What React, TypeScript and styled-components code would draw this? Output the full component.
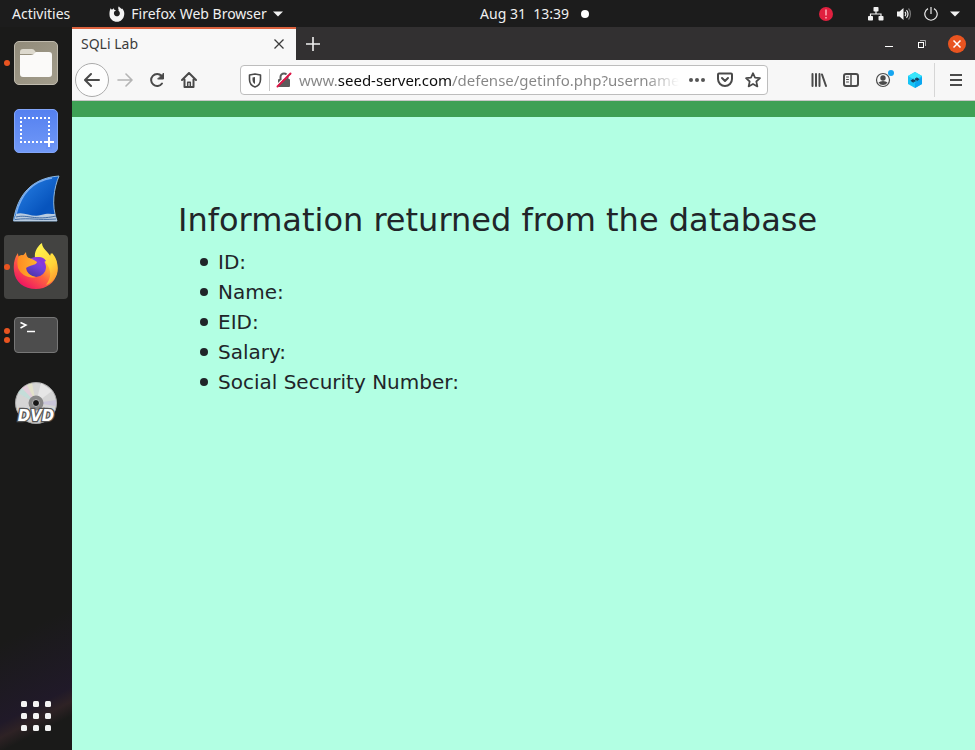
import React from "react";
import styled, { createGlobalStyle, css } from "styled-components";

const UI_FONT = `"Noto Sans", "Open Sans", sans-serif`;

const GlobalStyle = createGlobalStyle`
  *, *::before, *::after { box-sizing: border-box; }
  html, body { margin: 0; padding: 0; }
  button, input { font: inherit; color: inherit; margin: 0; }
  svg { display: block; flex: none; }
`;

const Desktop = styled.div`
  display: flex;
  flex-direction: column;
  min-height: 100vh;
  background: #1b1b1b;
  font: 14px/20px ${UI_FONT};
`;

/* ---------- system bar ---------- */

const SystemBar = styled.header`
  display: flex;
  align-items: center;
  height: 27px;
  padding: 0 15px 0 12px;
  background: #1c1c1c;
  color: #f0f0f0;
`;

const PlainButton = styled.button`
  display: flex;
  align-items: center;
  justify-content: center;
  padding: 0;
  border: 0;
  background: none;
  white-space: nowrap;
`;

const BarStart = styled.div`
  display: flex;
  flex: 1;
  align-items: center;
  gap: 39px;
`;

const AppMenu = styled(PlainButton)`
  gap: 6px;
`;

const Clock = styled(PlainButton)`
  gap: 12px;
  white-space: pre;
`;

const NotificationDot = styled.span`
  width: 8px;
  height: 8px;
  border-radius: 50%;
  background: #fff;
`;

const BarEnd = styled.div`
  display: flex;
  align-items: center;
  justify-content: flex-end;
  width: 371px;
`;

const Alert = styled(PlainButton)`
  margin-right: 35px;
`;

const StatusMenu = styled(PlainButton)`
  gap: 12px;
`;

/* ---------- dock ---------- */

const Workspace = styled.div`
  display: flex;
  flex: 1;
`;

const Dock = styled.nav`
  display: flex;
  flex-direction: column;
  gap: 4px;
  width: 72px;
  padding: 4px 4px 2px;
  background:
    linear-gradient(153deg, transparent 50%, rgba(46, 24, 76, 0.3) 78%, rgba(76, 46, 54, 0.4) 83%, transparent 88%) bottom / 100% 250px no-repeat,
    #1a1a19;
`;

const DockItem = styled.button<{ $active?: boolean }>`
  position: relative;
  display: flex;
  align-items: center;
  justify-content: center;
  height: 64px;
  padding: 0;
  border: 0;
  border-radius: 4px;
  background: ${(p) => (p.$active ? "#434341" : "transparent")};
`;

const RunningDots = styled.span`
  position: absolute;
  left: 0;
  top: 0;
  bottom: 0;
  display: flex;
  flex-direction: column;
  justify-content: center;
  gap: 3px;
`;

const RunningDot = styled.i`
  width: 6px;
  height: 6px;
  border-radius: 50%;
  background: #e95420;
`;

const DockSpacer = styled.div`
  flex: 1;
`;

/* ---------- browser ---------- */

const Browser = styled.section`
  display: flex;
  flex: 1;
  flex-direction: column;
  min-width: 0;
`;

const TabStrip = styled.div`
  display: flex;
  align-items: center;
  height: 33px;
  padding-right: 9px;
  background: #323031;
  color: #f4f4f4;
`;

const Tab = styled.div`
  display: flex;
  align-items: center;
  justify-content: space-between;
  align-self: stretch;
  width: 224px;
  padding: 0 12px 2px 9px;
  border-top: 2px solid #dd633f;
  background: #f8f8f8;
  color: #3c3c3c;
`;

const NewTab = styled(PlainButton)`
  width: 34px;
  height: 31px;
`;

const WindowControls = styled.div`
  display: flex;
  align-items: center;
  gap: 19px;
  margin-left: auto;
`;

const ControlButton = styled(PlainButton)`
  min-width: 14px;
`;

const Toolbar = styled.div`
  display: flex;
  align-items: center;
  height: 41px;
  padding: 0 3px;
  border-bottom: 1px solid #c8c8c8;
  background: #f7f7f7;
  color: #4a4a4a;
`;

const ToolButton = styled(PlainButton)<{ $faded?: boolean }>`
  width: 32px;
  height: 32px;
  ${(p) => p.$faded && css`color: #b4b4b4;`}
`;

const BackButton = styled(PlainButton)`
  width: 34px;
  height: 34px;
  border: 1px solid #ababab;
  border-radius: 50%;
  background: #fdfdfd;
`;

const AddressBar = styled.div`
  display: flex;
  flex: 1;
  align-items: center;
  min-width: 0;
  height: 30px;
  margin: 0 35px;
  border: 1px solid #bdbdbd;
  border-radius: 4px;
  background: #fff;
`;

const AddressButton = styled(PlainButton)`
  width: 28px;
  height: 28px;
`;

const AddressDivider = styled.span`
  width: 1px;
  height: 22px;
  background: #c8c8c8;
`;

/* The host name is drawn darker than the rest and the end of the address fades out. */
const AddressInput = styled.input`
  flex: 1;
  min-width: 0;
  height: 24px;
  margin: 0 4px 0 1px;
  padding: 0;
  border: 0;
  outline: 0;
  font-size: 15px;
  color: transparent;
  background: linear-gradient(to right, #858585 39px, #0c0c0c 39px, #0c0c0c 153px, #858585 153px);
  background-clip: text;
  -webkit-background-clip: text;
  mask-image: linear-gradient(to right, #000 calc(100% - 34px), transparent);
`;

const ToolDivider = styled.span`
  width: 1px;
  height: 34px;
  margin: 0 5px 0 3px;
  background: #d6d6d6;
`;

/* ---------- page ---------- */

const Page = styled.main`
  flex: 1;
  border-top: 16px solid #3ea055;
  background: #b2ffe3;
  color: #212529;
  font-family: "DejaVu Sans", sans-serif;
`;

const PageContent = styled.div`
  padding: 84px 106px;
`;

const PageHeading = styled.h1`
  margin: 0 0 8px;
  font-size: 32px;
  font-weight: 400;
  line-height: 38px;
`;

const FieldList = styled.ul`
  margin: 0;
  padding-left: 22px;
  list-style: none;
  font-size: 20px;
  line-height: 30px;
`;

const Field = styled.li`
  display: flex;
  align-items: center;
  gap: 10px;

  &::before {
    content: "";
    width: 8px;
    height: 8px;
    border-radius: 50%;
    background: currentColor;
  }
`;

/* ---------- icons ---------- */

const FirefoxMono = () => (
  <svg width="16" height="16" viewBox="0 0 16 16">
    <path fill="#f2f2f2" d="M1.600 2.300 2.900 3.700 4.900 2.200 5.200 3.800 7.100 4.300C5.200 5 4.700 6.300 5 7.900c.5 2 3 3 4.700 1.800 1.600-1.200 1.400-3.400.4-4.500L9 4.500l1-.2C8.900 2.700 9 1.300 9.900.2c.6 1.400 2 1.800 3 2.800l.3-.6c1.700 1.800 2.400 4 2 6.300C14.700 13 11.700 15.700 8 15.700 4 15.700.7 12.800.5 8.900.3 6.500.8 4.200 1.600 2.300Z" />
  </svg>
);

const Caret = () => (
  <svg width="10" height="6" viewBox="0 0 10 6"><path fill="#f2f2f2" d="M0 .5h10L5 5.500Z" /></svg>
);

const AlertIcon = () => (
  <svg width="14" height="14" viewBox="0 0 14 14">
    <circle cx="7" cy="7" r="7" fill="#e0203f" />
    <path stroke="#ffb9c4" strokeWidth="1.400" d="M7 2.500v6M7 10v1.500" />
  </svg>
);

const NetworkIcon = () => (
  <svg width="16" height="14" viewBox="0 0 16 14" fill="#f2f2f2">
    <rect x="5.500" y="0" width="5" height="4.500" rx=".8" />
    <rect x="0" y="9" width="5" height="4.500" rx=".8" />
    <rect x="10.500" y="9" width="5" height="4.500" rx=".8" />
    <path fill="none" stroke="#f2f2f2" strokeWidth="1.200" d="M8 4v3M2.500 9V7h10.500v2" />
  </svg>
);

const VolumeIcon = () => (
  <svg width="16" height="14" viewBox="0 0 16 14" fill="none">
    <path fill="#f2f2f2" d="M1 4.500h2.500L7.500 1v12L3.500 9.500H1Z" />
    <path stroke="#f2f2f2" strokeWidth="1.200" d="M9 5c1 1 1 3 0 4M10.500 3.200c2 2 2 5.600 0 7.600" />
    <path stroke="#777" strokeWidth="1.200" d="M12.500 1.500c2.600 3 2.600 8 0 11" />
  </svg>
);

const PowerIcon = () => (
  <svg width="14" height="14" viewBox="0 0 14 14" fill="none" stroke="#e8e8e8" strokeWidth="1.200">
    <path d="M4 1.600a6.200 6.200 0 1 0 6 0M7 0v7" />
  </svg>
);

const FilesIcon = () => (
  <svg width="44" height="44" viewBox="0 0 44 44">
    <defs>
      <linearGradient id="files" x1="0" y1="0" x2="1" y2="1">
        <stop offset="0" stopColor="#918b7a" /><stop offset="1" stopColor="#a39d8c" />
      </linearGradient>
    </defs>
    <rect x=".5" y=".5" width="43" height="43" rx="4.500" fill="url(#files)" stroke="#c0bbae" />
    <path fill="#ddd9ce" d="M6 11q0-3 3-3h9q2 0 3 2l2 3H6Z" />
    <path fill="#fbfaf9" d="M6 14h11q2 0 4-2l1-1h13q3 0 3 3v19q0 3-3 3H9q-3 0-3-3Z" />
  </svg>
);

const ScreenshotIcon = () => (
  <svg width="44" height="44" viewBox="0 0 44 44">
    <defs>
      <linearGradient id="shot" x1="0" y1="0" x2="0" y2="1">
        <stop offset="0" stopColor="#5480f0" /><stop offset="1" stopColor="#7199f7" />
      </linearGradient>
    </defs>
    <rect x=".5" y=".5" width="43" height="43" rx="4.500" fill="url(#shot)" stroke="#82a5f8" />
    <rect x="7" y="9" width="28" height="24" fill="none" stroke="#fff" strokeWidth="2" strokeDasharray="2 2" strokeDashoffset="1" />
    <path stroke="#6990f5" strokeWidth="6" d="M35 28v12M29 33h12" />
    <path stroke="#fff" strokeWidth="2" d="M35 28v10M30 33h10" />
  </svg>
);

const WiresharkIcon = () => (
  <svg width="48" height="48" viewBox="0 0 48 48">
    <defs>
      <linearGradient id="fin" x1="0" y1="0" x2="1" y2="1">
        <stop offset=".2" stopColor="#2278dd" /><stop offset=".7" stopColor="#0754bd" />
      </linearGradient>
    </defs>
    <path fill="url(#fin)" stroke="#90b8dc" d="M1.500 46C5 21 19 3 47 1 42 13 39 30 45 46Z" />
    <path fill="none" stroke="#79adf0" strokeWidth="1.500" d="M4 39C9 19 21 6 40 3" />
    <path fill="#b8cbe0" d="M2 46l2-7c8-3 16 4 25 1 6-2 10-1 14-1l2 7Z" />
    <path fill="none" stroke="#426da5" d="M4 42c12-3 18 4 40-1M3 44.500c16-2 21 1 41-.5" />
  </svg>
);

const FirefoxIcon = () => (
  <svg width="46" height="48" viewBox="0 0 46 48">
    <defs>
      <linearGradient id="fox" x1=".85" y1=".1" x2=".25" y2=".95">
        <stop offset="0" stopColor="#fff045" /><stop offset=".35" stopColor="#ffb52b" />
        <stop offset=".6" stopColor="#ff6540" /><stop offset="1" stopColor="#ef1761" />
      </linearGradient>
      <linearGradient id="flame" x1=".3" y1="0" x2=".8" y2="1">
        <stop offset="0" stopColor="#fff44f" /><stop offset=".6" stopColor="#ffd338" /><stop offset="1" stopColor="#ff922e" />
      </linearGradient>
      <linearGradient id="globe" x1=".8" y1="0" x2=".3" y2="1">
        <stop offset="0" stopColor="#a43be8" /><stop offset=".5" stopColor="#7141d8" /><stop offset="1" stopColor="#4b36a8" />
      </linearGradient>
      <linearGradient id="head" x1="0" y1="0" x2="1" y2="0">
        <stop offset="0" stopColor="#ff8b21" /><stop offset="1" stopColor="#ffb32f" />
      </linearGradient>
    </defs>
    <path fill="url(#fox)" d="M5 10c0 3 1 4 2 5 2-2 4-3 6-6 0 4 2 6 4 7 4 0 6 1 7 2l6-3c-6-5-6-10-2-14 1 5 6 7 9 12l1-3c6 6 7 12 6 20C42 40 33 46 23 46 11 46 2 39 1 28 0 20 2 14 5 10Z" />
    <path fill="url(#flame)" d="M22 15C21 8 25 3 29 0c0 6 7 9 9 15l1-5c5 5 7 14 5 21-2 5-6 9-11 11 7-9 5-18-3-25Z" />
    <circle cx="23" cy="24" r="10" fill="url(#globe)" />
    <path fill="#8638dc" d="M21 15c5-2 10-1 12 3l-2 1c2 3 2 6 1 8-2-6-6-10-11-12Z" />
    <path fill="url(#head)" d="M6 13c3-2 5-1 6 1 4 1 7 1 12 5 0 2-4 3-7 4-2 1-3 1-4 2 0 4 4 8 10 9-7 2-15-2-18-9-1-5-1-8 1-12Z" />
  </svg>
);

const TerminalIcon = () => (
  <svg width="44" height="36" viewBox="0 0 44 36">
    <rect x=".5" y=".5" width="43" height="35" rx="3.500" fill="#4d4d4d" stroke="#777" />
    <path fill="none" stroke="#fff" strokeWidth="1.500" d="M6.500 5.500 12 8l-5.500 3M13 14.500h8" />
  </svg>
);

const DvdIcon = () => (
  <svg width="44" height="44" viewBox="0 0 44 44">
    <circle cx="22" cy="22" r="20.500" fill="#d5d5d5" stroke="#aaa" />
    <path fill="#b9e2dc" opacity=".6" d="M22 22 4 12l4-5Z" />
    <path fill="#eecbe0" opacity=".6" d="M22 22 8 7l5-3Z" />
    <path fill="#f1efbf" opacity=".5" d="M22 22 13 4l5-2Z" />
    <path fill="#e6e6e6" d="M22 22 27 2l11 8Z" />
    <path fill="#c4bfdc" opacity=".7" d="M22 22l20-3v6Z" />
    <circle cx="22" cy="22" r="7.500" fill="#888" />
    <circle cx="22" cy="22" r="3.500" fill="#161616" stroke="#bbb" />
    <text x="22" y="40" textAnchor="middle" fontFamily="DejaVu Sans, sans-serif" fontSize="15" fontStyle="italic" fontWeight="700" fill="#fff" stroke="#555" strokeWidth="2.500" paintOrder="stroke">DVD</text>
  </svg>
);

const GridIcon = () => (
  <svg width="30" height="30" viewBox="0 0 30 30" fill="#f3f3f3">
    {[0, 12, 24].map((y) => [0, 12, 24].map((x) => <rect key={`${x}-${y}`} x={x} y={y} width="6" height="6" rx="1.500" />))}
  </svg>
);

const CrossIcon = () => (
  <svg width="10" height="10" viewBox="0 0 10 10" stroke="currentColor" strokeWidth="1.300"><path d="m.5.5 9 9M9.500.5l-9 9" /></svg>
);

const PlusIcon = () => (
  <svg width="14" height="14" viewBox="0 0 14 14" stroke="#f0f0f0" strokeWidth="1.600"><path d="M7 0v14M0 7h14" /></svg>
);

const MinimizeIcon = () => (
  <svg width="8" height="9" viewBox="0 0 8 9"><path stroke="#fff" d="M0 7.500h8" /></svg>
);

const RestoreIcon = () => (
  <svg width="8" height="8" viewBox="0 0 8 8" fill="none"><path stroke="#aaa" d="M2 .5h5.500V6" /><rect x=".5" y="2.500" width="5" height="5" stroke="#fff" /></svg>
);

const CloseIcon = () => (
  <svg width="18" height="18" viewBox="0 0 18 18"><circle cx="9" cy="9" r="9" fill="#e95420" /><path stroke="#fff" strokeWidth="1.500" d="m5.500 5.500 7 7m0-7-7 7" /></svg>
);

const stroke = { fill: "none", stroke: "currentColor", strokeWidth: 2, strokeLinecap: "round", strokeLinejoin: "round" } as const;

const BackIcon = () => (
  <svg width="16" height="16" viewBox="0 0 16 16" {...stroke}><path d="M15 8H1.500M7 2 1 8l6 6" /></svg>
);

const ForwardIcon = () => (
  <svg width="16" height="16" viewBox="0 0 16 16" {...stroke} strokeWidth={1.6}><path d="M1 8h13.500M9 2l6 6-6 6" /></svg>
);

const ReloadIcon = () => (
  <svg width="16" height="16" viewBox="0 0 16 16" {...stroke}>
    <path d="M13 11.500a6 6 0 1 1-.4-7.500" /><path fill="currentColor" strokeWidth="1" d="M14.500 1.500v5.500H9Z" />
  </svg>
);

const HomeIcon = () => (
  <svg width="16" height="16" viewBox="0 0 16 16" {...stroke}>
    <path d="M1 8 8 1l7 7M3.500 7.500V15h9V7.500" /><path strokeWidth="1.500" d="M6.700 14.500v-4.300h2.600v4.300" />
  </svg>
);

const ShieldIcon = () => (
  <svg width="14" height="15" viewBox="0 0 14 15" {...stroke} strokeWidth={1.6}>
    <path d="M7 1 12.500 2v4.500c0 4-2 6.300-5.500 7.500-3.500-1.200-5.500-3.500-5.500-7.500V2Z" />
    <path fill="currentColor" stroke="none" d="M7 4v7C5.200 10.200 4.500 8.600 4.500 6.500v-2Z" />
  </svg>
);

const InsecureIcon = () => (
  <svg width="16" height="16" viewBox="0 0 16 16">
    <path fill="none" stroke="#5b5b5b" strokeWidth="2" d="M4.500 8V5a3.500 3.500 0 0 1 7 0V8" />
    <rect x="2" y="7" width="12" height="8" rx="1" fill="#5b5b5b" />
    <path stroke="#fff" strokeWidth="1.500" d="M1 13 13 1" />
    <path stroke="#dd1647" strokeWidth="2" strokeLinecap="round" d="M1.500 14.500 14.500 1.500" />
  </svg>
);

const MoreIcon = () => (
  <svg width="16" height="16" viewBox="0 0 16 16" fill="#555"><circle cx="2" cy="8" r="2" /><circle cx="8" cy="8" r="2" /><circle cx="14" cy="8" r="2" /></svg>
);

const PocketIcon = () => (
  <svg width="16" height="16" viewBox="0 0 16 16" {...stroke}>
    <path d="M1 2.500q0-1 1-1h12q1 0 1 1V7A7 7 0 0 1 1 7Z" /><path d="M5 6l3 3 3-3" />
  </svg>
);

const StarIcon = () => (
  <svg width="16" height="16" viewBox="0 0 16 16" {...stroke} strokeWidth={1.7}>
    <path d="m8 1.200 2 4.500 5 .5-3.700 3.300 1.100 4.900L8 11.900l-4.400 2.500 1.100-4.900L1 6.200l5-.5Z" />
  </svg>
);

const LibraryIcon = () => (
  <svg width="16" height="16" viewBox="0 0 16 16" fill="none" stroke="currentColor" strokeWidth="2">
    <path strokeLinecap="round" d="M1.500 2v12M5 2v12M8.500 2v12M11 2.500l4 11.500" />
  </svg>
);

const SidebarIcon = () => (
  <svg width="16" height="16" viewBox="0 0 16 16" {...stroke}>
    <rect x="1" y="2" width="14" height="12" rx="2" /><path strokeWidth="1.500" d="M8 2v12" /><path strokeWidth="1" d="M3.500 5h2M3.500 7.500h2M3.500 10h2" />
  </svg>
);

const AccountIcon = () => (
  <svg width="22" height="22" viewBox="0 0 22 22">
    <circle cx="11" cy="11" r="6.500" fill="none" stroke="#4a4a4a" strokeWidth="1.200" />
    <circle cx="11" cy="9" r="2.700" fill="#4a4a4a" />
    <path fill="#4a4a4a" d="M6.500 13.500q1.500-1.500 4.500-1.500t4.500 1.500Q14 16 11 16t-4.500-2.500Z" />
    <circle cx="19" cy="4" r="3" fill="#16a5f0" />
  </svg>
);

const HexIcon = () => (
  <svg width="16" height="16" viewBox="0 0 16 16">
    <path fill="#17c4f6" d="m8 0 7 4v8l-7 4-7-4V4Z" /><path fill="#38e6fb" d="m8 0 7 4-7 4-7-4Z" />
    <path fill="#0ca6f0" d="m15 5v7l-7 4v-5Z" />
    <path fill="#173c5c" d="M3.500 8.800 6.500 6.500v1.300h2v2h-2V11ZM12.500 7.200 9.500 5v1.300H8v1.800h1.500v1.300Z" />
  </svg>
);

const MenuIcon = () => (
  <svg width="12" height="12" viewBox="0 0 12 12" stroke="currentColor" strokeWidth="2"><path d="M0 1h12M0 6h12M0 11h12" /></svg>
);

/* ---------- data ---------- */

type DockEntry = { label: string; Icon: React.FC; running: number; active?: boolean };

const dockEntries: DockEntry[] = [
  { label: "Files", Icon: FilesIcon, running: 1 },
  { label: "Screenshot", Icon: ScreenshotIcon, running: 0 },
  { label: "Wireshark", Icon: WiresharkIcon, running: 0 },
  { label: "Firefox Web Browser", Icon: FirefoxIcon, running: 1, active: true },
  { label: "Terminal", Icon: TerminalIcon, running: 2 },
  { label: "DVD drive", Icon: DvdIcon, running: 0 },
];

const fields = ["ID:", "Name:", "EID:", "Salary:", "Social Security Number:"];

export default function App() {
  return (
    <Desktop>
      <GlobalStyle />
      <SystemBar>
        <BarStart>
          <PlainButton>Activities</PlainButton>
          <AppMenu><FirefoxMono />Firefox Web Browser<Caret /></AppMenu>
        </BarStart>
        <Clock>{"Aug 31  13:39"}<NotificationDot /></Clock>
        <BarEnd>
          <Alert aria-label="Alerts"><AlertIcon /></Alert>
          <StatusMenu aria-label="System menu"><NetworkIcon /><VolumeIcon /><PowerIcon /><Caret /></StatusMenu>
        </BarEnd>
      </SystemBar>
      <Workspace>
        <Dock aria-label="Dock">
          {dockEntries.map(({ label, Icon, running, active }) => (
            <DockItem key={label} aria-label={label} $active={active}>
              <RunningDots>{Array.from({ length: running }, (_, i) => <RunningDot key={i} />)}</RunningDots>
              <Icon />
            </DockItem>
          ))}
          <DockSpacer />
          <DockItem aria-label="Show applications"><GridIcon /></DockItem>
        </Dock>
        <Browser>
          <TabStrip>
            <Tab>
              <span>SQLi Lab</span>
              <PlainButton aria-label="Close tab"><CrossIcon /></PlainButton>
            </Tab>
            <NewTab aria-label="New tab"><PlusIcon /></NewTab>
            <WindowControls>
              <ControlButton aria-label="Minimize"><MinimizeIcon /></ControlButton>
              <ControlButton aria-label="Restore"><RestoreIcon /></ControlButton>
              <ControlButton aria-label="Close window"><CloseIcon /></ControlButton>
            </WindowControls>
          </TabStrip>
          <Toolbar>
            <BackButton aria-label="Back"><BackIcon /></BackButton>
            <ToolButton aria-label="Forward" $faded><ForwardIcon /></ToolButton>
            <ToolButton aria-label="Reload"><ReloadIcon /></ToolButton>
            <ToolButton aria-label="Home"><HomeIcon /></ToolButton>
            <AddressBar>
              <AddressButton aria-label="Tracking protection"><ShieldIcon /></AddressButton>
              <AddressDivider />
              <AddressButton aria-label="Connection not secure"><InsecureIcon /></AddressButton>
              <AddressInput aria-label="Address" defaultValue="www.seed-server.com/defense/getinfo.php?username" />
              <AddressButton aria-label="Page actions"><MoreIcon /></AddressButton>
              <AddressButton aria-label="Save to Pocket"><PocketIcon /></AddressButton>
              <AddressButton aria-label="Bookmark"><StarIcon /></AddressButton>
            </AddressBar>
            <ToolButton aria-label="Library"><LibraryIcon /></ToolButton>
            <ToolButton aria-label="Sidebars"><SidebarIcon /></ToolButton>
            <ToolButton aria-label="Account"><AccountIcon /></ToolButton>
            <ToolButton aria-label="Extension"><HexIcon /></ToolButton>
            <ToolDivider />
            <ToolButton aria-label="Menu"><MenuIcon /></ToolButton>
          </Toolbar>
          <Page>
            <PageContent>
              <PageHeading>Information returned from the database</PageHeading>
              <FieldList>{fields.map((f) => <Field key={f}>{f}</Field>)}</FieldList>
            </PageContent>
          </Page>
        </Browser>
      </Workspace>
    </Desktop>
  );
}
